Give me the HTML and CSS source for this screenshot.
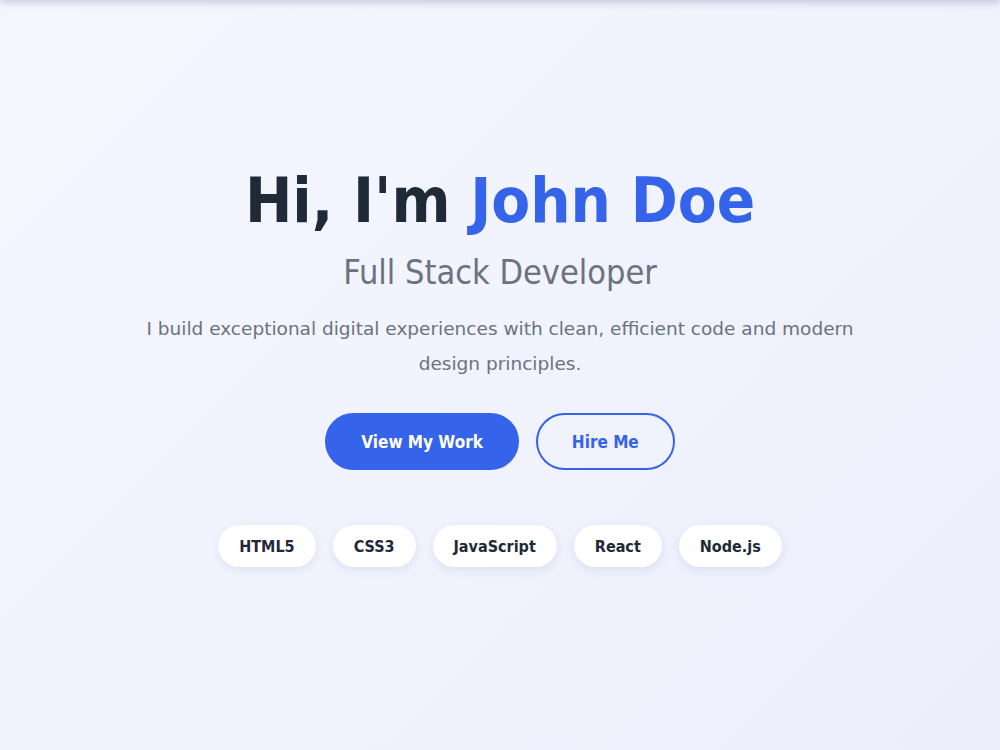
FILE: index.html
```html
<!DOCTYPE html>
<html lang="en">
<head>
<meta charset="utf-8">
<title>John Doe</title>
<link rel="stylesheet" href="styles.css">
</head>
<body>
<div class="topbar"></div>
<section class="hero">
  <h1 class="title">Hi, I'm <span class="accent">John Doe</span></h1>
  <h2 class="subtitle">Full Stack Developer</h2>
  <p class="lead">I build exceptional digital experiences with clean, efficient code and modern design principles.</p>
  <div class="actions">
    <a class="btn btn-primary" href="#">View My Work</a>
    <a class="btn btn-outline" href="#">Hire Me</a>
  </div>
  <ul class="tags">
    <li class="tag">HTML5</li>
    <li class="tag">CSS3</li>
    <li class="tag">JavaScript</li>
    <li class="tag">React</li>
    <li class="tag">Node.js</li>
  </ul>
</section>
</body>
</html>
```

FILE: styles.css
```css
* { box-sizing: border-box; }
html, body { margin: 0; padding: 0; }
body {
  font-family: "DejaVu Sans Condensed", "DejaVu Sans", sans-serif;
  background: linear-gradient(135deg, #f5f7ff 0%, #eceefc 100%);
  min-height: 100vh;
  color: #1f2937;
  overflow: hidden;
}
.topbar {
  position: fixed;
  top: -10px;
  left: 0;
  right: 0;
  height: 10px;
  box-shadow: 0 2px 8px rgba(40, 45, 90, 0.25);
}
.hero {
  min-height: 100vh;
  display: flex;
  flex-direction: column;
  align-items: center;
  justify-content: center;
  text-align: center;
  padding: 0 20px 20px;
}
.title {
  margin: 0;
  font-size: 63px;
  line-height: 1.2;
  font-weight: 700;
  color: #1f2937;
}
.accent { color: #3563e9; }
.subtitle {
  margin: 14px 0 0;
  font-size: 34px;
  line-height: 1.2;
  font-weight: 400;
  color: #6b7280;
}
.lead {
  margin: 18px 0 0;
  max-width: 730px;
  font-family: "DejaVu Sans", sans-serif;
  font-size: 18.5px;
  line-height: 1.9;
  color: #6b7280;
}
.actions {
  margin-top: 32px;
  display: flex;
  gap: 17px;
}
.btn {
  display: inline-flex;
  align-items: center;
  justify-content: center;
  height: 57px;
  padding: 0 34px;
  border-radius: 30px;
  font-size: 17px;
  font-weight: 700;
  text-decoration: none;
  border: 2px solid #3563e9;
}
.btn-primary { background: #3563e9; color: #fff; }
.btn-outline { background: transparent; color: #3563e9; }
.tags {
  list-style: none;
  margin: 55px 0 0;
  padding: 0;
  display: flex;
  gap: 17px;
}
.tag {
  height: 42px;
  display: flex;
  align-items: center;
  padding: 0 21px;
  background: #fff;
  border-radius: 21px;
  font-size: 16px;
  font-weight: 700;
  color: #1f2937;
  box-shadow: 0 3px 10px rgba(60, 70, 140, 0.10);
}
```
